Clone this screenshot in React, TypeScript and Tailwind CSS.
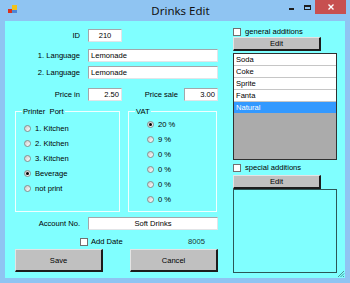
import type { ReactNode } from "react";

function TextBox({ children, className }: { children?: ReactNode; className: string }) {
  return (
    <div
      className={`h-[13px] bg-white border border-[#a3a7ab] border-b-[#e2e5e8] border-r-[#e2e5e8] flex items-center px-[2px] ${className}`}
    >
      {children}
    </div>
  );
}

function CheckBox() {
  return <span className="w-[8px] h-[8px] shrink-0 bg-white border border-[#707070]" />;
}

function Radio({ label, checked }: { label: string; checked?: boolean }) {
  return (
    <div className="h-[15px] flex items-center">
      <span className="w-[7px] h-[7px] rounded-full border border-[#8c8c8c] bg-linear-to-br from-[#c9c9c9] to-white flex items-center justify-center">
        {checked && <span className="w-[3px] h-[3px] rounded-full bg-black" />}
      </span>
      <span className="ml-[4px]">{label}</span>
    </div>
  );
}

function Button({ label, className }: { label: string; className: string }) {
  return (
    <div
      className={`bg-[#c0c0c0] border-t border-l border-[#e4e4e4] border-r-2 border-b-2 border-r-[#1c1c1c] border-b-[#1c1c1c] flex items-center justify-center ${className}`}
    >
      {label}
    </div>
  );
}

function TitleBar() {
  return (
    <div className="h-[21px] flex items-start">
      <div className="w-[78px] pl-[8px] pt-[5px]">
        <svg width="9" height="9" viewBox="0 0 9 9">
          <rect x="4" y="0" width="5" height="5" fill="#f2c21b" />
          <rect x="4" y="5" width="5" height="3" fill="#4d86d6" />
          <rect x="0" y="4" width="4" height="4" fill="#d9321f" />
        </svg>
      </div>
      <div className="flex-1 h-[20px] flex items-center justify-center font-['Noto_Sans',sans-serif] text-[11.5px] text-[#111]">
        Drinks Edit
      </div>
      <div className="flex items-start mr-[4px]">
        <div className="w-[16px] h-[14px] flex items-center justify-center">
          <span className="w-[5px] h-[2px] mt-[4px] bg-[#1e1e1e]" />
        </div>
        <div className="w-[16px] h-[14px] flex items-center justify-center">
          <span className="w-[7px] h-[5px] border border-t-2 border-[#1e1e1e]" />
        </div>
        <div className="w-[31px] h-[14px] bg-[#c75050] flex items-center justify-center">
          <svg width="6" height="6" viewBox="0 0 6 6">
            <path d="M0.5 0.5 L5.5 5.5 M5.5 0.5 L0.5 5.5" stroke="white" strokeWidth="1.4" />
          </svg>
        </div>
      </div>
    </div>
  );
}

export default function App() {
  const drinks = ["Soda", "Coke", "Sprite", "Fanta"];

  return (
    <div className="w-[350px] h-[283px] bg-[#8fc4f2] flex flex-col font-['Liberation_Sans',Arial,sans-serif] text-[7.6px] text-black leading-[9px]">
      <TitleBar />

      <div className="relative mx-[5px] mb-[5px] flex-1 bg-[#80ffff] flex">
        {/* left side */}
        <div className="w-[213px] pt-[8px] flex flex-col">
          <div className="h-[13px] flex items-center">
            <span className="w-[75px] text-right">ID</span>
            <TextBox className="ml-[8px] w-[34px] justify-center">210</TextBox>
          </div>
          <div className="mt-[7px] h-[13px] flex items-center">
            <span className="w-[75px] text-right">1. Language</span>
            <TextBox className="ml-[8px] w-[130px]">Lemonade</TextBox>
          </div>
          <div className="mt-[4px] h-[13px] flex items-center">
            <span className="w-[75px] text-right">2. Language</span>
            <TextBox className="ml-[8px] w-[130px]">Lemonade</TextBox>
          </div>
          <div className="mt-[9px] h-[13px] flex items-center">
            <span className="w-[75px] text-right">Price in</span>
            <TextBox className="ml-[8px] w-[34px] justify-end">2.50</TextBox>
            <span className="flex-1 text-right pr-[6px]">Price sale</span>
            <TextBox className="w-[34px] justify-end">3.00</TextBox>
          </div>

          <div className="mt-[10px] pl-[10px] flex gap-[8px]">
            <div className="relative w-[105px] h-[101px] border border-[#f0ffff]">
              <span className="absolute left-[6px] -top-[5px] bg-[#80ffff] px-[1px]">Printer&nbsp; Port</span>
              <div className="pl-[8px] pt-[9px] flex flex-col">
                <Radio label="1. Kitchen" />
                <Radio label="2. Kitchen" />
                <Radio label="3. Kitchen" />
                <Radio label="Beverage" checked />
                <Radio label="not print" />
              </div>
            </div>
            <div className="relative w-[89px] h-[101px] border border-[#f0ffff]">
              <span className="absolute left-[6px] -top-[5px] bg-[#80ffff] px-[1px]">VAT</span>
              <div className="pl-[18px] pt-[5px] flex flex-col">
                <Radio label="20 %" checked />
                <Radio label="9 %" />
                <Radio label="0 %" />
                <Radio label="0 %" />
                <Radio label="0 %" />
                <Radio label="0 %" />
              </div>
            </div>
          </div>

          <div className="mt-[5px] h-[13px] flex items-center">
            <span className="w-[75px] text-right">Account No.</span>
            <TextBox className="ml-[8px] w-[130px] justify-center">Soft Drinks</TextBox>
          </div>
          <div className="mt-[7px] h-[9px] flex items-center pl-[75px]">
            <CheckBox />
            <span className="ml-[3px]">Add Date</span>
            <span className="ml-auto mr-[13px] text-[#1a3333]">8005</span>
          </div>
          <div className="mt-[3px] pl-[10px] flex gap-[27px]">
            <Button label="Save" className="w-[88px] h-[23px]" />
            <Button label="Cancel" className="w-[88px] h-[23px]" />
          </div>
        </div>

        {/* right side */}
        <div className="ml-[15px] w-[104px] pt-[6px] flex flex-col">
          <div className="h-[9px] flex items-center">
            <CheckBox />
            <span className="ml-[4px]">general additions</span>
          </div>
          <Button label="Edit" className="mt-[1px] w-[88px] h-[14px]" />
          <div className="mt-[2px] h-[107px] w-[104px] border border-[#303030] bg-[#ababab] flex flex-col">
            {drinks.map((d) => (
              <div key={d} className="h-[12px] bg-white border-b border-[#c6c6c6] pl-[2px] flex items-center">
                {d}
              </div>
            ))}
            <div className="h-[11px] bg-[#3399ff] text-white pl-[2px] flex items-center">Natural</div>
          </div>
          <div className="mt-[3px] h-[9px] flex items-center">
            <CheckBox />
            <span className="ml-[4px]">special additions</span>
          </div>
          <Button label="Edit" className="mt-[3px] w-[88px] h-[14px]" />
          <div className="h-[84px] w-[104px] border border-[#2c5858]" />
        </div>

        <svg className="absolute right-0 bottom-0" width="8" height="8" viewBox="0 0 8 8">
          <path d="M7 1 L1 7 M7 3.5 L3.5 7 M7 6 L6 7" stroke="#3d7a7a" strokeWidth="0.8" />
        </svg>
      </div>
    </div>
  );
}
